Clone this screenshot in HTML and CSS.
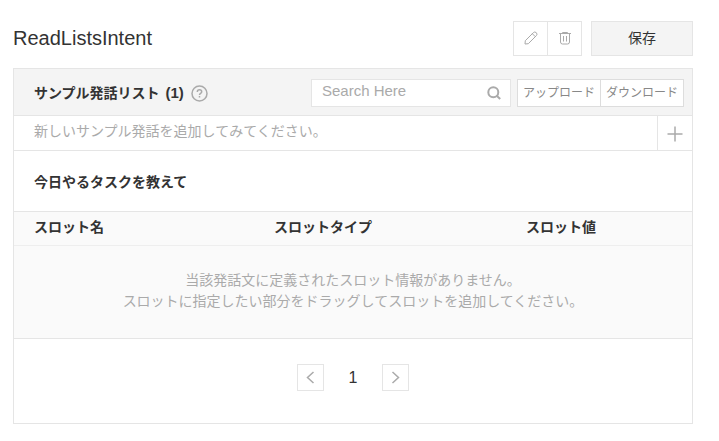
FILE: index.html
```
<!DOCTYPE html>
<html lang="ja">

<head>
    <meta charset="UTF-8">
    <meta name="viewport" content="width=device-width, initial-scale=1.0">
    <title>ReadListsIntent</title>
    <link rel="stylesheet" href="styles.css">
</head>

<body>

    <header class="page-header">
        <h1>ReadListsIntent</h1>
        <div class="button-group">
            <button type="button" class="icon-button" aria-label="編集">
                <svg width="14" height="14" viewBox="0 0 14 14">
                    <path d="M1 13l.3-3.300 8-8a2 2 0 0 1 3 3l-8 8zM8.300 2.700l3 3" />
                </svg>
            </button>
            <button type="button" class="icon-button" aria-label="削除">
                <svg width="14" height="14" viewBox="0 0 14 14">
                    <path d="M1 2.500h12M4.500 2.500v-1h5v1M2.500 2.500v8.500q0 2 2 2h5q2 0 2-2v-8.500M5.500 5v5.500M8.500 5v5.500" />
                </svg>
            </button>
        </div>
        <button type="button" class="save-button">保存</button>
    </header>

    <main class="panel">
        <div class="panel-header">
            <h2>サンプル発話リスト <span class="count">(1)</span></h2>
            <button type="button" class="help-button" aria-label="ヘルプ">
                <svg width="17" height="17" viewBox="0 0 17 17">
                    <circle cx="8.500" cy="8.500" r="7.500" />
                    <path d="M6.300 7q0-2.200 2.200-2.200t2.200 1.900q0 1-1.100 1.700t-1.100 1.500M8.500 11v1.600" />
                </svg>
            </button>
            <div class="search">
                <input type="text" id="search" placeholder="Search Here" aria-label="Search Here">
                <button type="button" class="search-button" aria-label="検索">
                    <svg width="14" height="14" viewBox="0 0 14 14">
                        <circle cx="6.300" cy="6.300" r="5" />
                        <path d="M9.500 9.500l3.700 3.500" />
                    </svg>
                </button>
            </div>
            <div class="button-group">
                <button type="button" class="file-button">アップロード</button>
                <button type="button" class="file-button">ダウンロード</button>
            </div>
        </div>

        <div class="add-row">
            <input type="text" id="utterance" placeholder="新しいサンプル発話を追加してみてください。" aria-label="サンプル発話">
            <button type="button" class="add-button" aria-label="追加">
                <svg width="16" height="16" viewBox="0 0 16 16">
                    <path d="M8 .5v15M.5 8h15" />
                </svg>
            </button>
        </div>

        <p class="utterance">今日やるタスクを教えて</p>

        <table class="slots">
            <thead>
                <tr>
                    <th class="slot-name">スロット名</th>
                    <th class="slot-type">スロットタイプ</th>
                    <th>スロット値</th>
                </tr>
            </thead>
            <tbody>
                <tr>
                    <td colspan="3">当該発話文に定義されたスロット情報がありません。<br>スロットに指定したい部分をドラッグしてスロットを追加してください。</td>
                </tr>
            </tbody>
        </table>

        <nav class="pagination" aria-label="ページ">
            <button type="button" class="page-button" aria-label="前へ">
                <svg width="13" height="13" viewBox="0 0 13 13">
                    <path d="M9.500 1l-6 5.500 6 5.500" />
                </svg>
            </button>
            <span class="page-current">1</span>
            <button type="button" class="page-button" aria-label="次へ">
                <svg width="13" height="13" viewBox="0 0 13 13">
                    <path d="M3.500 1l6 5.500-6 5.500" />
                </svg>
            </button>
        </nav>
    </main>

</body>

</html>
```

FILE: styles.css
```
* {
    box-sizing: border-box;
}

body {
    margin: 0;
    padding: 21px 26px 17px 13px;
    background: #fff;
    color: #333;
    font-family: "Liberation Sans", "Noto Sans CJK JP", sans-serif;
    font-size: 14px;
    line-height: 21px;
}

h1,
h2,
p {
    margin: 0;
}

button,
input {
    margin: 0;
    padding: 0;
    border: 0;
    background: none;
    color: inherit;
    font: inherit;
}

button {
    display: flex;
    align-items: center;
    justify-content: center;
    cursor: pointer;
}

svg {
    display: block;
    fill: none;
    stroke: #aaa;
}

/* ページ上部 */
.page-header {
    display: flex;
    align-items: center;
    margin-bottom: 12px;
}

.page-header h1 {
    flex: 1;
    font-size: 20px;
    font-weight: normal;
}

.button-group {
    display: flex;
}

.button-group button {
    border: 1px solid #e5e5e5;
    background: #fff;
}

.button-group button + button {
    margin-left: -1px;
}

.button-group .icon-button {
    width: 35px;
    height: 35px;
    padding-bottom: 2px;
}

.save-button {
    width: 102px;
    height: 35px;
    margin-left: 9px;
    border: 1px solid #e5e5e5;
    background: #f4f4f4;
}

/* パネル */
.panel {
    border: 1px solid #e5e5e5;
}

.panel-header {
    display: flex;
    align-items: center;
    padding: 10px 8px 8px 20px;
    border-bottom: 1px solid #e5e5e5;
    background: #f4f4f4;
}

.panel-header h2 {
    font-size: 14px;
}

.count {
    margin-left: 2px;
    font-size: 15px;
}

.help-button {
    margin-left: 7px;
}

.help-button svg {
    stroke-width: 1.5;
}

.search {
    display: flex;
    width: 200px;
    height: 28px;
    margin: 0 6px 0 auto;
    border: 1px solid #e5e5e5;
    background: #fff;
}

.search input {
    flex: 1;
    min-width: 0;
    padding: 0 0 5px 10px;
    font-size: 15px;
}

.search-button {
    width: 32px;
}

.search-button svg {
    stroke-width: 2;
}

input::placeholder {
    color: #aaa;
    opacity: 1;
}

.file-button {
    width: 84px;
    height: 28px;
    color: #888;
    font-size: 12px;
}

.panel-header .file-button {
    border-color: #ddd;
}

.add-row {
    display: flex;
    height: 35px;
    border-bottom: 1px solid #e5e5e5;
}

.add-row input {
    flex: 1;
    min-width: 0;
    padding: 0 20px 3px;
}

.add-button {
    width: 35px;
    padding-top: 2px;
    border-left: 1px solid #e5e5e5;
}

.add-button svg {
    stroke-width: 1.5;
}

.utterance {
    padding: 21px 20px 18px;
    font-weight: bold;
}

/* スロット一覧 */
.slots {
    width: 100%;
    border-top: 1px solid #e5e5e5;
    border-bottom: 1px solid #e5e5e5;
    border-spacing: 0;
    background: #fafafa;
    table-layout: fixed;
}

.slots th {
    padding: 5px 0 7px 20px;
    border-bottom: 1px solid #eee;
    text-align: left;
}

.slot-name {
    width: 240px;
}

.slot-type {
    width: 252px;
}

.slots td {
    padding: 24px 20px 26px;
    color: #aaa;
    text-align: center;
}

/* ページ送り */
.pagination {
    display: flex;
    align-items: center;
    justify-content: center;
    padding: 25px 0 32px;
}

.page-button {
    width: 27px;
    height: 27px;
    border: 1px solid #e5e5e5;
}

.page-button svg {
    stroke-width: 1.5;
}

.page-current {
    width: 58px;
    font-size: 16px;
    text-align: center;
}
```
